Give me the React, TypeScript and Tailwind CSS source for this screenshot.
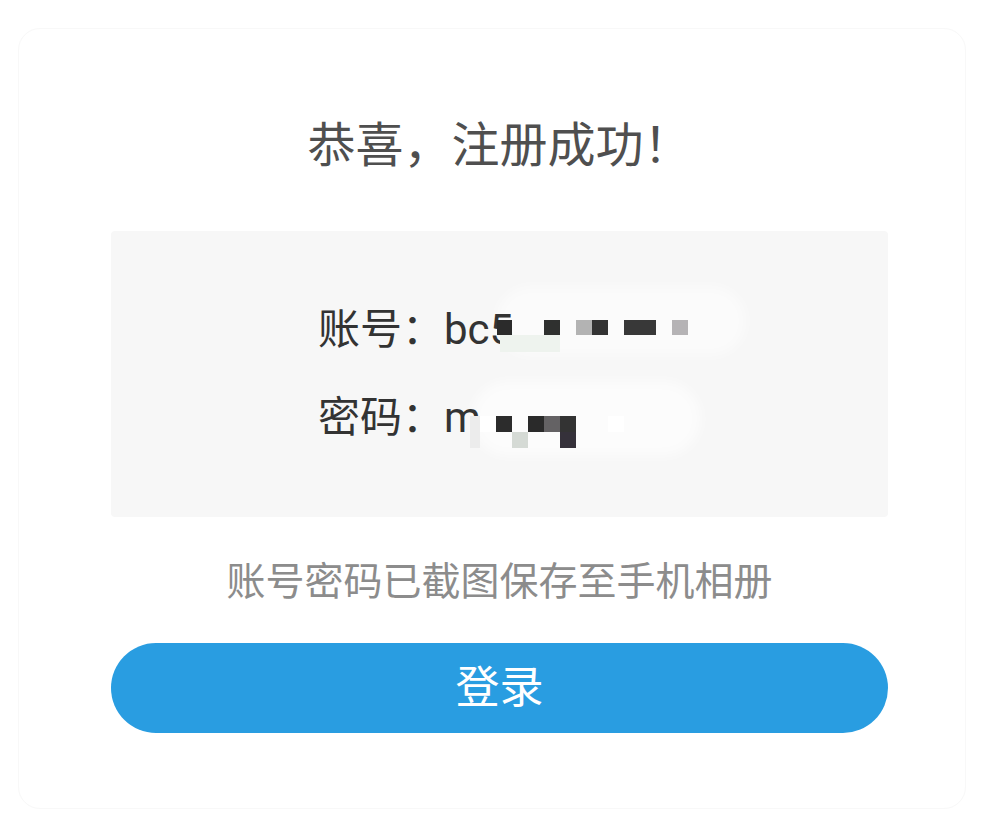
const font = { fontFamily: 'Roboto, "Noto Sans CJK SC", "Noto Sans", sans-serif' };

type Block = { x: number; y: number; w: number; h: number; c: string };

// mosaic blocks, page coords (box origin = 111, 231)
const blocks: Block[] = [
  { x: 500, y: 335, w: 60, h: 17, c: "bg-[#eef3ee]" },
  { x: 497, y: 320, w: 15, h: 15, c: "bg-[#2b2b2b]" },
  { x: 544, y: 320, w: 16, h: 15, c: "bg-[#2f302f]" },
  { x: 576, y: 320, w: 16, h: 15, c: "bg-[#b3b3b3]" },
  { x: 592, y: 320, w: 16, h: 15, c: "bg-[#333333]" },
  { x: 624, y: 320, w: 32, h: 15, c: "bg-[#383838]" },
  { x: 672, y: 320, w: 16, h: 15, c: "bg-[#b5b3b5]" },
  { x: 470, y: 416, w: 10, h: 32, c: "bg-[#ececec]" },
  { x: 480, y: 416, w: 16, h: 16, c: "bg-white" },
  { x: 496, y: 416, w: 16, h: 16, c: "bg-[#2c2c2c]" },
  { x: 512, y: 432, w: 16, h: 16, c: "bg-[#d5dad5]" },
  { x: 528, y: 416, w: 16, h: 16, c: "bg-[#2a2a2a]" },
  { x: 544, y: 416, w: 16, h: 16, c: "bg-[#646264]" },
  { x: 560, y: 416, w: 16, h: 16, c: "bg-[#333333]" },
  { x: 560, y: 432, w: 16, h: 16, c: "bg-[#35313a]" },
  { x: 608, y: 416, w: 16, h: 16, c: "bg-white" },
];

export default function App() {
  return (
    <div className="w-[990px] h-[840px] bg-white overflow-hidden" style={font}>
      <div className="ml-[18px] mt-[28px] w-[948px] h-[781px] border border-[#f8f8f8] rounded-[22px] pl-[92px] pt-[87px]">
        <div className="w-[777px] flex flex-col">
          <h1 className="text-center text-[48px] leading-[60px] text-[#4f4f4f] font-normal">
            恭喜，注册成功！
          </h1>

          <div className="relative mt-[55px] h-[286px] bg-[#f7f7f7] rounded-[4px] pl-[207px] pt-[74px] overflow-hidden">
            <div className="absolute left-[385px] top-[55px] w-[250px] h-[70px] rounded-full bg-white/50 blur-[6px]" />
            <div className="absolute left-[360px] top-[150px] w-[230px] h-[75px] rounded-full bg-white/60 blur-[6px]" />
            <div className="relative text-[42px] leading-[50px] text-[#333333]">账号：bc5</div>
            <div className="relative mt-[38px] text-[42px] leading-[50px] text-[#333333]">密码：m</div>
            {blocks.map((b, i) => (
              <div
                key={i}
                className={`absolute ${b.c}`}
                style={{ left: b.x - 111, top: b.y - 231, width: b.w, height: b.h }}
              />
            ))}
          </div>

          <p className="mt-[40px] text-center text-[39px] leading-[50px] text-[#8c8c8c]">
            账号密码已截图保存至手机相册
          </p>

          <button className="mt-[36px] h-[90px] w-full rounded-full bg-[#299de1] text-white text-[44px] leading-none">
            登录
          </button>
        </div>
      </div>
    </div>
  );
}
